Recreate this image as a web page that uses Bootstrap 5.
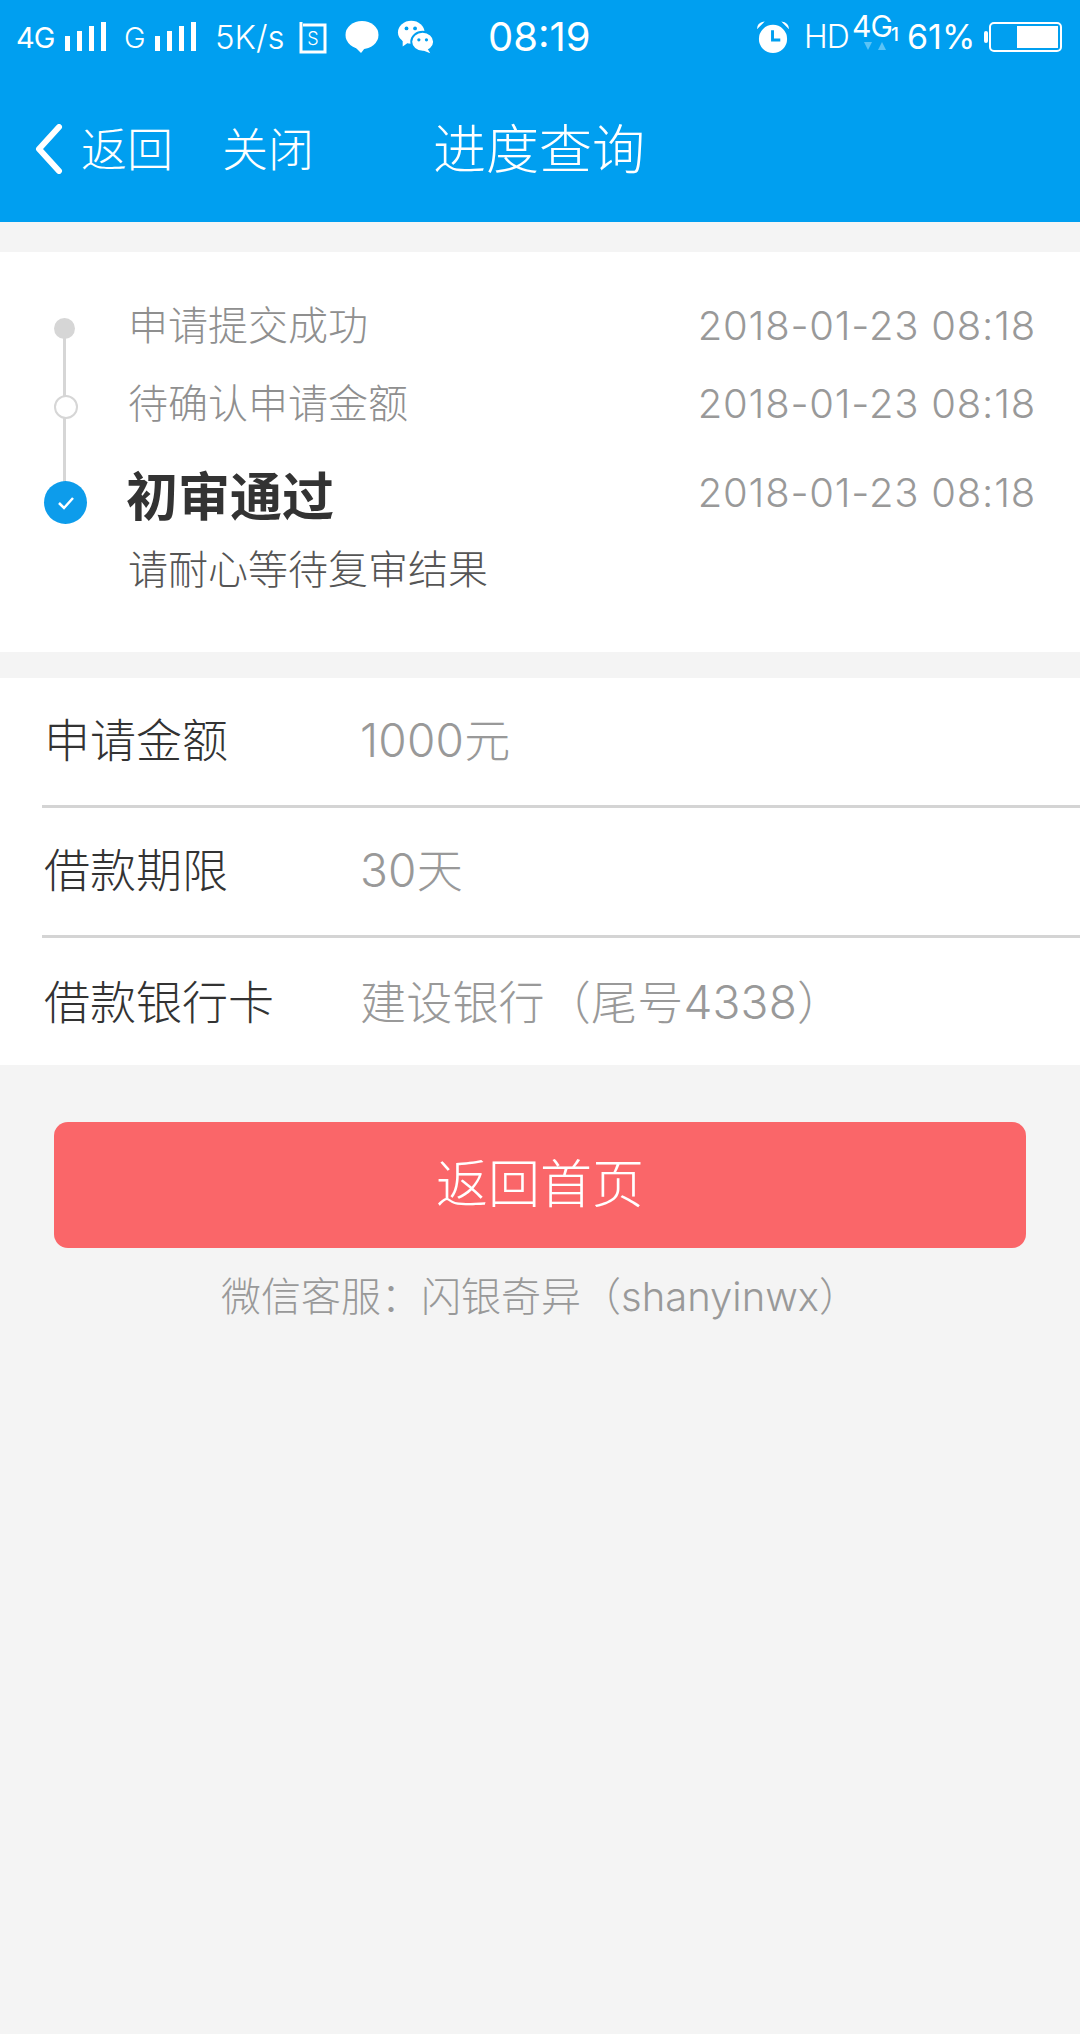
<!DOCTYPE html>
<html lang="zh-CN">
<head>
  <meta charset="UTF-8">
  <meta name="viewport" content="width=device-width, initial-scale=1.0">
  <title>进度查询</title>
  <link rel="stylesheet" href="https://cdn.jsdelivr.net/npm/bootstrap@5.3.0/dist/css/bootstrap.min.css">
  <style>
    html, body { height: 100%; }
    body { background: #f4f4f4; font-family: "Inter", "Noto Sans CJK SC", sans-serif; color: #333; }
    .app-head { background: #009ff0; height: 222px; color: #fff; }
    .status-bar { height: 74px; padding-left: 16px; line-height: 1; font-weight: 300; }
    .status-bar svg { display: block; flex: none; }
    .status-sig { font-size: 29px; width: 38px; letter-spacing: -1px; font-weight: 400; white-space: nowrap; }
    .status-g { font-size: 29px; margin-left: 17px; width: 20px; }
    .status-net { font-size: 33px; margin-left: 18px; width: 73px; white-space: nowrap; }
    .status-clock { font-size: 40px; margin-left: 53px; width: 103px; white-space: nowrap; font-weight: 400; }
    .status-hd { font-size: 32px; margin-left: 14px; width: 42px; white-space: nowrap; letter-spacing: -1px; }
    .net-stack { width: 36px; margin-left: 6px; font-size: 30px; line-height: 1; height: 40px; margin-top: -12px; letter-spacing: -1px; font-weight: 400; white-space: nowrap; }
    .status-one { font-size: 19px; font-weight: 500; margin-left: 3px; width: 8px; margin-top: -6px; }
    .status-pct { font-size: 34px; margin-left: 8px; width: 68px; white-space: nowrap; font-weight: 400; }
    .head-nav { height: 148px; padding-top: 2px; font-size: 46px; font-weight: 300; }
    .back-link { margin-left: 34px; }
    .back-text { margin-left: 17px; }
    .close-text { margin-left: 49px; }
    .head-title { left: -2px; right: 0; top: 6px; bottom: 0; font-size: 53px; font-weight: 300; }
    .steps-panel { margin-top: 30px; height: 400px; background: #fff; position: relative; }
    .step-rail { left: 63px; top: 75px; width: 3px; height: 165px; background: #d6d6d6; }
    .step-row { padding-left: 128px; padding-right: 44px; }
    .step-one { height: 131px; padding-top: 53px; }
    .step-two { height: 89px; }
    .step-text { font-size: 40px; color: #8f8f8f; line-height: 42px; font-weight: 300; }
    .step-time { font-size: 40px; letter-spacing: 0.8px; color: #999; line-height: 42px; font-weight: 300; white-space: nowrap; }
    .step-now { font-size: 52px; font-weight: 700; color: #333; line-height: 60px; margin-left: -2px; margin-top: -4px; }
    .step-note { font-size: 40px; color: #555; line-height: 44px; font-weight: 300; margin-top: 20px; }
    .dot-full { left: 54px; top: 66px; width: 21px; height: 21px; border-radius: 50%; background: #d6d6d6; }
    .dot-ring { left: 54px; top: 143px; width: 24px; height: 24px; border-radius: 50%; background: #fff; border: 2px solid #d6d6d6; }
    .dot-check { left: 44px; top: 229px; width: 43px; height: 43px; border-radius: 50%; background: #0d9ceb; }
    .info-panel { margin-top: 26px; background: #fff; }
    .info-row { height: 130px; margin-left: 42px; padding-bottom: 2px; font-size: 46px; font-weight: 300; border-bottom: 3px solid #d4d4d4; }
    .info-row:last-child { border-bottom: 0; height: 127px; padding-top: 2px; padding-bottom: 0; }
    .info-label { width: 316px; margin-left: 2px; color: #333; font-weight: 300; }
    .info-value { color: #999; font-size: 46px; letter-spacing: 0.2px; }
    .home-btn { margin: 57px 54px 0; width: 972px; height: 126px; background: #fa6669; border: 0; border-radius: 14px; font-size: 52px; font-weight: 300; color: #fff; }
    .home-btn:hover { background: #fa6669; color: #fff; }
    .help-text { margin-top: 27px; font-size: 40px; line-height: 44px; color: #999; font-weight: 300; }
  </style>
</head>
<body>
  <header class="app-head">
    <!-- 状态栏 -->
    <div class="status-bar d-flex align-items-center">
      <span class="status-sig">4G</span>
      <svg style="margin-left:11px" width="42" height="32" viewBox="0 0 42 32" fill="#fff"><rect x="0" y="15" width="5" height="15"/><rect x="12" y="10" width="5" height="20"/><rect x="24" y="5" width="5" height="25"/><rect x="36" y="1" width="5" height="29"/></svg>
      <span class="status-g">G</span>
      <svg style="margin-left:11px" width="42" height="32" viewBox="0 0 42 32" fill="#fff"><rect x="0" y="15" width="5" height="15"/><rect x="12" y="10" width="5" height="20"/><rect x="24" y="5" width="5" height="25"/><rect x="36" y="1" width="5" height="29"/></svg>
      <span class="status-net">5K/s</span>
      <svg style="margin-left:11px" width="28" height="34" viewBox="0 0 28 34"><path d="M2 2v30h24V5H4" fill="none" stroke="#fff" stroke-width="3"/><text x="14" y="25" text-anchor="middle" font-family="Inter" font-size="18" fill="#fff">S</text></svg>
      <svg style="margin-left:18px" width="34" height="34" viewBox="0 0 34 34" fill="#fff"><ellipse cx="17" cy="15" rx="16.5" ry="14"/><path d="M9 26l7 7 4-5z"/></svg>
      <svg style="margin-left:18px" width="38" height="36" viewBox="0 0 40 36" fill="#fff"><ellipse cx="15" cy="13" rx="14" ry="12"/><path d="M6 20l0 8 7-5z"/><ellipse cx="27" cy="23" rx="12" ry="10.5" stroke="#009ff0" stroke-width="2"/><path d="M32 30l3 5-8-3z"/><circle cx="10" cy="9" r="2" fill="#009ff0"/><circle cx="19" cy="9" r="2" fill="#009ff0"/><circle cx="23" cy="21" r="1.7" fill="#009ff0"/><circle cx="31" cy="21" r="1.7" fill="#009ff0"/></svg>
      <span class="status-clock">08:19</span>
      <svg style="margin-left:165px" width="34" height="35" viewBox="0 0 35 35"><circle cx="17.500" cy="19" r="14.500" fill="#fff"/><path d="M17 10v10h8" fill="none" stroke="#009ff0" stroke-width="3"/><path d="M1 9q0-7 8-8zM34 9q0-7-8-8z" fill="#fff"/></svg>
      <span class="status-hd">HD</span>
      <span class="net-stack position-relative"><span>4G</span><svg class="position-absolute" style="left:12px;top:30px" width="24" height="10" viewBox="0 0 24 10" fill="#5cc3f5"><path d="M0 1h8L4 9zM14 9h8l-4-8z"/></svg></span>
      <span class="status-one">1</span>
      <span class="status-pct">61%</span>
      <svg style="margin-left:9px" width="78" height="32" viewBox="0 0 78 32"><rect x="0" y="10" width="4" height="12" rx="2" fill="#fff"/><rect x="6" y="2" width="71" height="28" rx="4" fill="none" stroke="#fff" stroke-width="2"/><rect x="33" y="5" width="41" height="22" fill="#fff"/></svg>
    </div>
    <!-- 导航 -->
    <nav class="head-nav d-flex align-items-center position-relative">
      <svg class="back-link" width="30" height="50" viewBox="0 0 30 50"><path d="M25 3L5 25l20 22" fill="none" stroke="#fff" stroke-width="6" stroke-linecap="round" stroke-linejoin="round"/></svg>
      <span class="back-text">返回</span>
      <span class="close-text">关闭</span>
      <div class="head-title position-absolute d-flex align-items-center justify-content-center">进度查询</div>
    </nav>
  </header>

  <!-- 进度 -->
  <section class="steps-panel">
    <div class="step-rail position-absolute"></div>
    <div class="dot-full position-absolute"></div>
    <div class="dot-ring position-absolute"></div>
    <div class="dot-check position-absolute d-flex align-items-center justify-content-center">
      <svg width="18" height="14" viewBox="0 0 18 14"><path d="M2 7l5 5 9-10" fill="none" stroke="#fff" stroke-width="2.500"/></svg>
    </div>
    <div class="step-row step-one d-flex justify-content-between">
      <span class="step-text">申请提交成功</span>
      <span class="step-time">2018-01-23 08:18</span>
    </div>
    <div class="step-row step-two d-flex justify-content-between">
      <span class="step-text">待确认申请金额</span>
      <span class="step-time">2018-01-23 08:18</span>
    </div>
    <div class="step-row d-flex justify-content-between">
      <div>
        <div class="step-now">初审通过</div>
        <div class="step-note">请耐心等待复审结果</div>
      </div>
      <span class="step-time">2018-01-23 08:18</span>
    </div>
  </section>

  <!-- 申请信息 -->
  <section class="info-panel">
    <div class="info-row d-flex align-items-center"><span class="info-label">申请金额</span><span class="info-value">1000元</span></div>
    <div class="info-row d-flex align-items-center"><span class="info-label">借款期限</span><span class="info-value">30天</span></div>
    <div class="info-row d-flex align-items-center"><span class="info-label">借款银行卡</span><span class="info-value">建设银行（尾号4338）</span></div>
  </section>

  <button type="button" class="btn home-btn d-block">返回首页</button>
  <p class="help-text text-center mb-0">微信客服：闪银奇异（shanyinwx）</p>

  <script src="https://cdn.jsdelivr.net/npm/bootstrap@5.3.0/dist/js/bootstrap.bundle.min.js"></script>
</body>
</html>
